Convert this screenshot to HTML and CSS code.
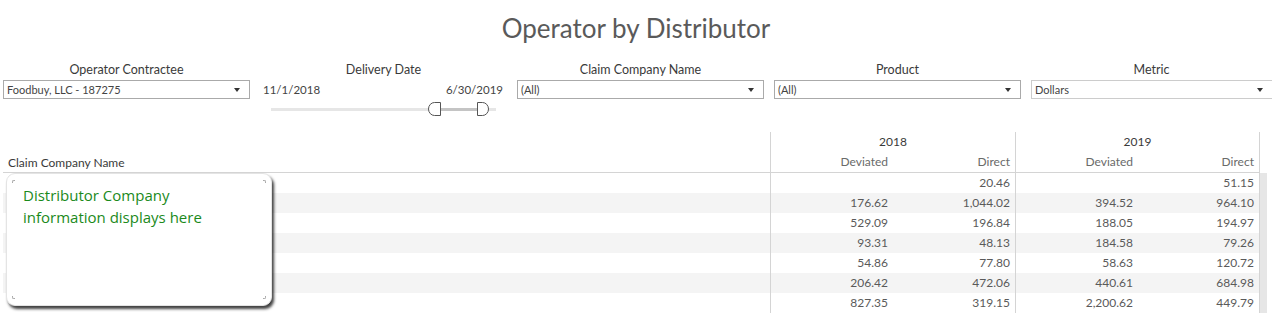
FILE: index.html
```html
<!DOCTYPE html>
<html lang="en">
<head>
    <meta charset="UTF-8">
    <title>Operator by Distributor</title>
    <link rel="stylesheet" href="styles.css">
</head>
<body>

    <!-- Title -->
    <h1 class="title">Operator by Distributor</h1>

    <!-- Filters -->
    <div class="filters">
        <div class="filter">
            <div class="filter-label">Operator Contractee</div>
            <div class="dropdown">Foodbuy, LLC - 187275</div>
        </div>

        <div class="filter">
            <div class="filter-label">Delivery Date</div>
            <div class="date-range">
                <span>11/1/2018</span>
                <span>6/30/2019</span>
            </div>
            <svg class="slider" width="225" height="14" viewBox="0 0 225 14">
                <rect x="0" y="6" width="225" height="3" fill="#e6e6e6"/>
                <rect x="169" y="6" width="37" height="3" fill="#c4c4c4"/>
                <path d="M169.5 0.5 V13.5 H163.5 A6 6.5 0 0 1 163.5 0.5 Z" fill="#fff" stroke="#555"/>
                <path d="M206.5 0.5 V13.5 H211.5 A6 6.5 0 0 0 211.5 0.5 Z" fill="#fff" stroke="#555"/>
            </svg>
        </div>

        <div class="filter">
            <div class="filter-label">Claim Company Name</div>
            <div class="dropdown">(All)</div>
        </div>

        <div class="filter">
            <div class="filter-label">Product</div>
            <div class="dropdown">(All)</div>
        </div>

        <div class="filter filter-wide">
            <div class="filter-label">Metric</div>
            <div class="dropdown dropdown-light">Dollars</div>
        </div>
    </div>

    <!-- Crosstab -->
    <div class="crosstab">
        <div class="head">
            <div class="name-head">Claim Company Name</div>
            <div class="year year-2018">2018</div>
            <div class="year year-2019">2019</div>
            <div class="col-head">Deviated</div>
            <div class="col-head split">Direct</div>
            <div class="col-head">Deviated</div>
            <div class="col-head split">Direct</div>
        </div>

        <div class="body">
            <div class="rows" id="rows"></div>
            <div class="scrollbar"></div>
        </div>

        <!-- Tooltip over the name column -->
        <div class="tooltip">
            <p>Distributor Company<br>information displays here</p>
            <span class="mark mark-tl"></span>
            <span class="mark mark-tr"></span>
            <span class="mark mark-bl"></span>
            <span class="mark mark-br"></span>
        </div>
    </div>

    <script>
        const data = [
            ['', '20.46', '', '51.15'],
            ['176.62', '1,044.02', '394.52', '964.10'],
            ['529.09', '196.84', '188.05', '194.97'],
            ['93.31', '48.13', '184.58', '79.26'],
            ['54.86', '77.80', '58.63', '120.72'],
            ['206.42', '472.06', '440.61', '684.98'],
            ['827.35', '319.15', '2,200.62', '449.79']
        ];

        const rows = document.getElementById('rows');
        data.forEach(values => {
            const row = document.createElement('div');
            row.className = 'row';
            row.innerHTML = `<div class="cell name"></div>
                <div class="cell">${values[0]}</div>
                <div class="cell split">${values[1]}</div>
                <div class="cell">${values[2]}</div>
                <div class="cell split">${values[3]}</div>`;
            rows.appendChild(row);
        });
    </script>

</body>
</html>
```

FILE: styles.css
```css
/* Reset and General Styling */
* {
    margin: 0;
    padding: 0;
    box-sizing: border-box;
    font-family: 'Lato', 'Liberation Sans', sans-serif;
}

body {
    background: #ffffff;
    color: #333333;
    width: 1272px;
    height: 313px;
    overflow: hidden;
}

/* Title */
.title {
    height: 56px;
    line-height: 56px;
    text-align: center;
    font-size: 26px;
    font-weight: 400;
    color: #5a5a5a;
}

/* Filters */
.filters {
    display: grid;
    grid-template-columns: 247px 247px 247px 247px 1fr;
    column-gap: 10px;
    height: 76px;
    padding: 6px 0 0 3px;
}

.filter-label {
    height: 16px;
    line-height: 16px;
    margin-bottom: 2px;
    text-align: center;
    font-size: 12.5px;
    color: #3a3a3a;
}

.dropdown {
    position: relative;
    height: 19px;
    line-height: 17px;
    padding-left: 3px;
    border: 1px solid #aaaaaa;
    font-size: 11px;
    color: #444444;
}

.dropdown::after {
    content: '';
    position: absolute;
    right: 9px;
    top: 7px;
    border-left: 3.5px solid transparent;
    border-right: 3.5px solid transparent;
    border-top: 4px solid #333333;
}

.dropdown-light {
    border-color: #cccccc;
    border-right: none;
}

/* Date range slider */
.date-range {
    display: flex;
    justify-content: space-between;
    height: 19px;
    line-height: 19px;
    padding: 0 4px 0 3px;
    font-size: 11.5px;
    color: #444444;
}

.slider {
    display: block;
    margin: 3px 0 0 11px;
}

/* Crosstab */
.crosstab {
    position: relative;
    margin-left: 3px;
}

.head {
    display: grid;
    grid-template-columns: 768px 122px 123px 122px 122px;
    grid-template-rows: 20px 20px;
    width: 1257px;
    border-bottom: 1px solid #d4d4d4;
    font-size: 12px;
}

.name-head {
    grid-row: 1 / 3;
    display: flex;
    align-items: flex-end;
    padding-left: 5px;
    line-height: 18px;
    border-right: 1px solid #d4d4d4;
    color: #3a3a3a;
}

.year {
    line-height: 20px;
    text-align: center;
    border-right: 1px solid #d4d4d4;
    color: #3a3a3a;
}

.year-2018 {
    grid-column: 2 / 4;
}

.year-2019 {
    grid-column: 4 / 6;
}

.col-head {
    line-height: 20px;
    text-align: right;
    padding-right: 5px;
    color: #6a6a6a;
}

.split {
    border-right: 1px solid #d4d4d4;
}

.body {
    display: flex;
}

.rows {
    width: 1257px;
}

.row {
    display: grid;
    grid-template-columns: 768px 122px 123px 122px 122px;
    height: 20px;
}

.row:nth-child(even) {
    background: #f4f4f4;
}

.cell {
    line-height: 19px;
    text-align: right;
    padding-right: 5px;
    font-size: 12px;
    color: #5a5a5a;
}

.cell.name {
    border-right: 1px solid #d4d4d4;
}

.scrollbar {
    width: 7px;
    background: #e6e6e6;
}

/* Tooltip */
.tooltip {
    position: absolute;
    left: 3px;
    top: 41px;
    width: 266px;
    height: 133px;
    background: #ffffff;
    border: 1px solid #e4e4e4;
    border-radius: 9px;
    box-shadow: 2px 3px 3px rgba(0, 0, 0, 0.75);
    padding: 10px 0 0 16px;
}

.tooltip p {
    font-family: 'Open Sans', 'Liberation Sans', sans-serif;
    font-size: 15px;
    line-height: 22px;
    color: #1b8a1b;
}

.mark {
    position: absolute;
    width: 3px;
    height: 3px;
    border: 0 solid #aaaaaa;
}

.mark-tl { left: 5px; top: 6px; border-left-width: 1px; border-top-width: 1px; border-top-left-radius: 2px; }
.mark-tr { right: 5px; top: 6px; border-right-width: 1px; border-top-width: 1px; border-top-right-radius: 2px; }
.mark-bl { left: 5px; bottom: 6px; border-left-width: 1px; border-bottom-width: 1px; border-bottom-left-radius: 2px; }
.mark-br { right: 5px; bottom: 6px; border-right-width: 1px; border-bottom-width: 1px; border-bottom-right-radius: 2px; }
```
